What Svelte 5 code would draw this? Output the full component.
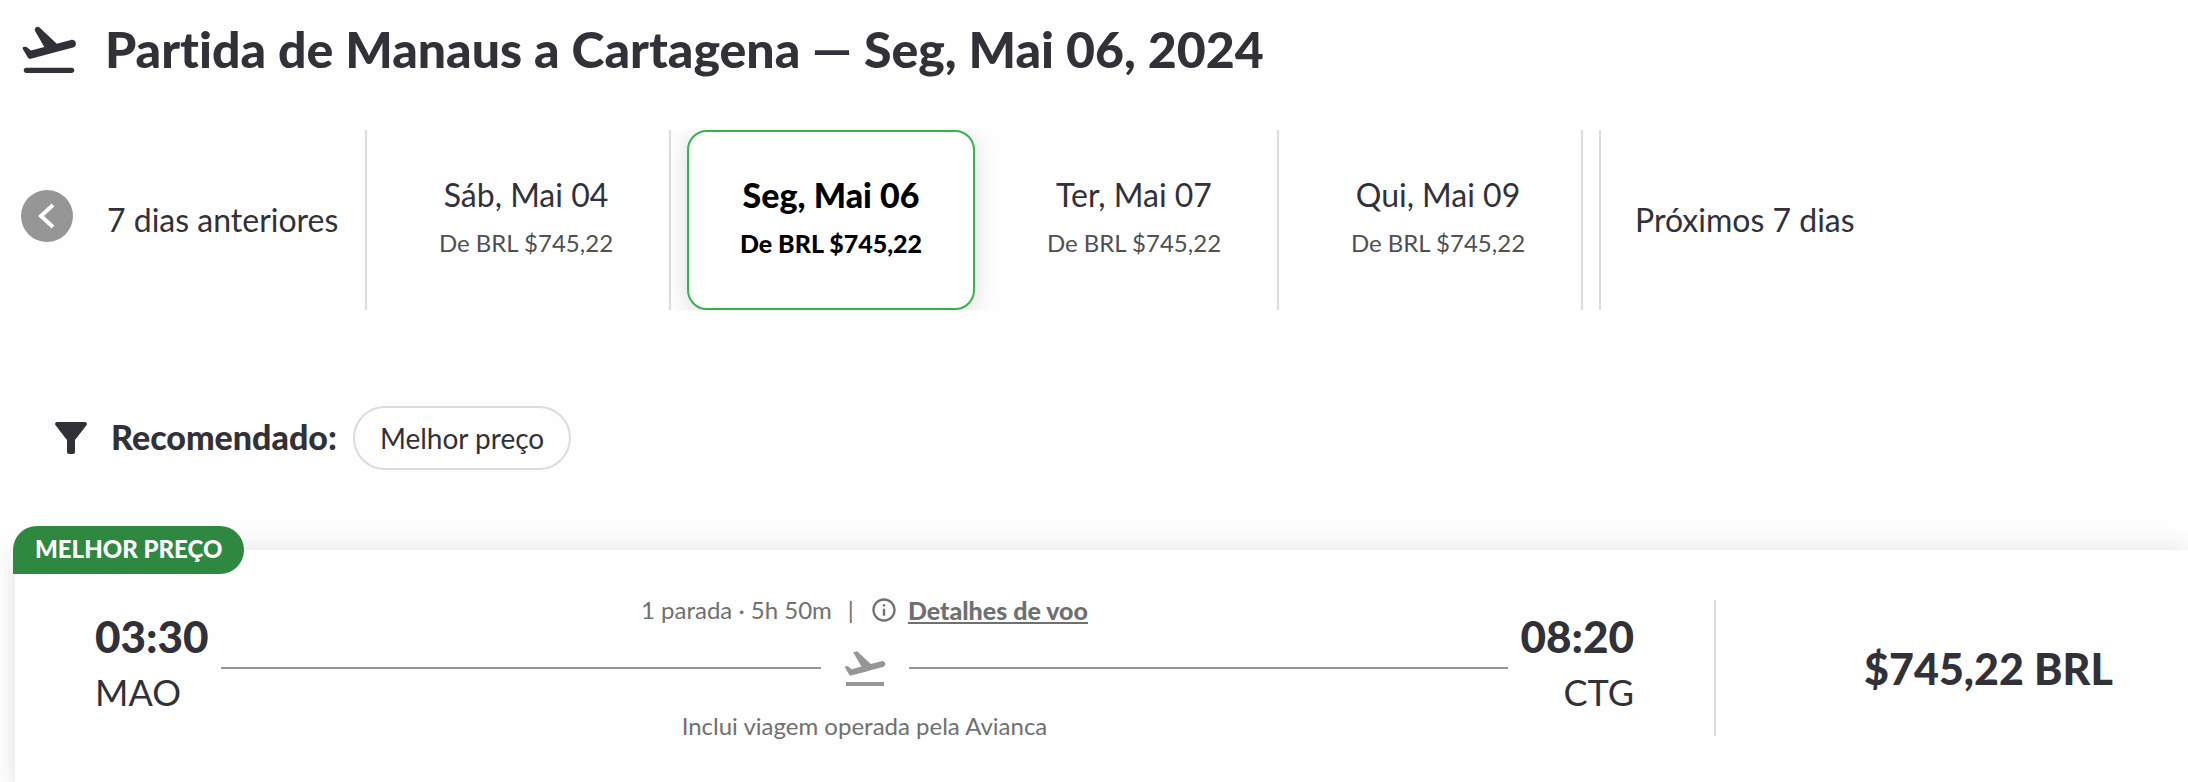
<script>
	let selected = "Seg, Mai 06";

	let days = [
		{ label: "Sáb, Mai 04", price: "De BRL $745,22" },
		{ label: "Seg, Mai 06", price: "De BRL $745,22" },
		{ label: "Ter, Mai 07", price: "De BRL $745,22" },
		{ label: "Qui, Mai 09", price: "De BRL $745,22" },
	];

	let flight = {
		departure: "03:30",
		from: "MAO",
		arrival: "08:20",
		to: "CTG",
		stops: "1 parada · 5h 50m",
		operator: "Inclui viagem operada pela Avianca",
		price: "$745,22 BRL",
	};
</script>

<main>
	<header>
		<svg class="takeoff" viewBox="0 0 24 24" aria-hidden="true">
			<path
				d="M20.5 19h-17c-.55 0-1 .45-1 1s.45 1 1 1h17c.55 0 1-.45 1-1s-.45-1-1-1zm1.57-9.36c-.22-.8-1.04-1.27-1.84-1.06L14.92 10 8.46 3.98c-.27-.25-.65-.35-1.01-.26-.67.18-1 .95-.66 1.55l3.44 5.97-4.97 1.33-1.57-1.24c-.25-.19-.57-.26-.88-.18l-.33.09c-.32.08-.47.45-.3.73l1.88 3.25c.23.39.69.58 1.12.47L21 11.48c.8-.22 1.28-1.04 1.07-1.84z"
			/>
		</svg>
		<h1>Partida de Manaus a Cartagena — Seg, Mai 06, 2024</h1>
	</header>

	<nav class="days">
		<button class="prev">
			<svg class="circle" viewBox="0 0 52 52" aria-hidden="true">
				<circle cx="26" cy="26" r="26" />
				<path d="M32 15 20 26 32 37" />
			</svg>
			7 dias anteriores
		</button>
		{#each days as day}
			<div class="day" class:active={selected === day.label}>
				<button on:click={() => (selected = day.label)}>
					<span class="date">{day.label}</span>
					<span class="from">{day.price}</span>
				</button>
			</div>
		{/each}
		<button class="next">Próximos 7 dias</button>
	</nav>

	<section class="filters">
		<svg class="funnel" viewBox="0 0 24 24" aria-hidden="true">
			<path
				d="M4.25 5.61C6.27 8.2 10 13 10 13v6c0 .55.45 1 1 1h2c.55 0 1-.45 1-1v-6s3.72-4.8 5.74-7.39c.51-.66.04-1.61-.79-1.61H5.04c-.83 0-1.3.95-.79 1.61z"
			/>
		</svg>
		<strong>Recomendado:</strong>
		<button class="pill">Melhor preço</button>
	</section>

	<article class="card">
		<span class="badge">MELHOR PREÇO</span>
		<div class="route">
			<div class="end">
				<b>{flight.departure}</b>
				<span>{flight.from}</span>
			</div>
			<div class="leg">
				<div class="info">
					<span>{flight.stops}</span>
					<span class="bar">|</span>
					<svg viewBox="0 0 24 24" aria-hidden="true">
						<path
							d="M11 7h2v2h-2zm0 4h2v6h-2zm1-9C6.48 2 2 6.48 2 12s4.48 10 10 10 10-4.48 10-10S17.52 2 12 2zm0 18c-4.41 0-8-3.59-8-8s3.59-8 8-8 8 3.59 8 8-3.59 8-8 8z"
						/>
					</svg>
					<a href="#detalhes">Detalhes de voo</a>
				</div>
				<div class="track">
					<i></i>
					<svg viewBox="0 0 24 24" aria-hidden="true">
						<path
							d="M2.5 19h19v2h-19zm19.57-9.36c-.21-.8-1.04-1.28-1.84-1.06L14.92 10l-6.9-6.43-1.93.51 4.14 7.17-4.97 1.33-1.97-1.54-1.45.39 1.82 3.16.77 1.33 1.6-.43 5.31-1.42 4.35-1.16L21 11.49c.81-.23 1.28-1.05 1.07-1.85z"
						/>
					</svg>
					<i></i>
				</div>
				<div class="operator">{flight.operator}</div>
			</div>
			<div class="end right">
				<b>{flight.arrival}</b>
				<span>{flight.to}</span>
			</div>
		</div>
		<div class="price">{flight.price}</div>
	</article>
</main>

<style>
	:global(body) {
		overflow: hidden;
		background: #fefefe;
	}
	main {
		font-family: "Lato", "Open Sans", sans-serif;
		font-variant-ligatures: none;
		color: #323138;
	}
	button {
		padding: 0;
		border: 0;
		background: none;
		font: inherit;
		color: inherit;
		cursor: pointer;
	}
	svg {
		flex: none;
		fill: currentColor;
	}

	header {
		display: flex;
		align-items: center;
		gap: 24px;
		padding: 17px 17px 49px;
	}
	.takeoff {
		width: 64px;
		height: 64px;
	}
	h1 {
		margin: 0;
		font-size: 50px;
		font-weight: 900;
		line-height: 64px;
	}

	.days {
		display: flex;
		height: 180px;
		overflow: hidden;
		font-size: 32px;
	}
	.prev {
		display: flex;
		align-items: center;
		gap: 34px;
		box-sizing: border-box;
		width: 367px;
		padding-left: 21px;
		border-right: 2px solid #dcdcdc;
		white-space: nowrap;
	}
	.circle {
		width: 52px;
		height: 52px;
		margin-bottom: 6px;
	}
	.circle circle {
		fill: #969696;
	}
	.circle path {
		fill: none;
		stroke: #fff;
		stroke-width: 4;
	}
	.day {
		display: flex;
		box-sizing: border-box;
		width: 304px;
		padding-left: 16px;
		border-right: 2px solid #dcdcdc;
	}
	.day button {
		display: flex;
		flex: 1;
		flex-direction: column;
		align-items: center;
		justify-content: center;
		gap: 8px;
		border: 2px solid transparent;
		border-radius: 20px;
	}
	.date {
		line-height: 40px;
	}
	.from {
		font-size: 24px;
		line-height: 40px;
		color: #505050;
	}
	.active {
		border-right: 0;
	}
	.active button {
		border-color: #35b44e;
		background: #fff;
		box-shadow: 0 4px 24px rgba(0, 0, 0, 0.14);
		font-weight: 900;
		color: #000;
	}
	.active .date {
		font-size: 34px;
	}
	.active .from {
		font-size: 25px;
		color: #000;
	}
	.next {
		margin-left: 16px;
		padding-left: 34px;
		border-left: 2px solid #dcdcdc;
	}
	.prev,
	.next,
	.day button {
		padding-bottom: 2px;
	}

	.filters {
		display: flex;
		align-items: center;
		gap: 16px;
		padding: 96px 47px 80px;
	}
	.funnel {
		width: 48px;
		height: 48px;
	}
	strong {
		padding-bottom: 4px;
		font-size: 34px;
		font-weight: 900;
	}
	.pill {
		height: 64px;
		padding: 0 25px;
		border: 2px solid #dcdcdc;
		border-radius: 32px;
		font-size: 28px;
	}

	.card {
		position: relative;
		display: flex;
		align-items: center;
		height: 236px;
		margin-left: 15px;
		background: #fefefe;
		box-shadow: 0 0 24px rgba(0, 0, 0, 0.12);
	}
	.badge {
		position: absolute;
		top: -24px;
		left: -2px;
		padding: 0 22px;
		border-radius: 24px 24px 24px 0;
		background: #2f8840;
		font-size: 24px;
		font-weight: 900;
		line-height: 46px;
		padding-bottom: 2px;
		color: #fff;
	}
	.route {
		display: flex;
		flex: 1;
		align-items: center;
		height: 136px;
		padding: 0 80px;
		border-right: 2px solid #dcdcdc;
	}
	.end {
		display: flex;
		flex-direction: column;
		padding-bottom: 8px;
		font-size: 36px;
		line-height: 56px;
	}
	.end b {
		font-size: 44px;
		font-weight: 900;
	}
	.right {
		text-align: right;
	}
	.leg {
		flex: 1;
		margin: 0 12px;
		font-size: 24px;
		line-height: 32px;
		text-align: center;
		color: #707070;
	}
	.info {
		display: flex;
		align-items: center;
		justify-content: center;
	}
	.info svg {
		width: 28px;
		height: 28px;
		margin-right: 10px;
	}
	.bar {
		margin: 0 16px;
	}
	.info a {
		font-size: 25px;
		font-weight: 900;
		color: inherit;
	}
	.track {
		display: flex;
		align-items: center;
		gap: 20px;
		margin: 18px 0;
		color: #969696;
	}
	.track i {
		flex: 1;
		height: 2px;
		background: #969696;
	}
	.track svg {
		width: 48px;
		height: 48px;
	}
	.price {
		box-sizing: border-box;
		width: 472px;
		padding-right: 75px;
		font-size: 43px;
		font-weight: 900;
		text-align: right;
	}
</style>
